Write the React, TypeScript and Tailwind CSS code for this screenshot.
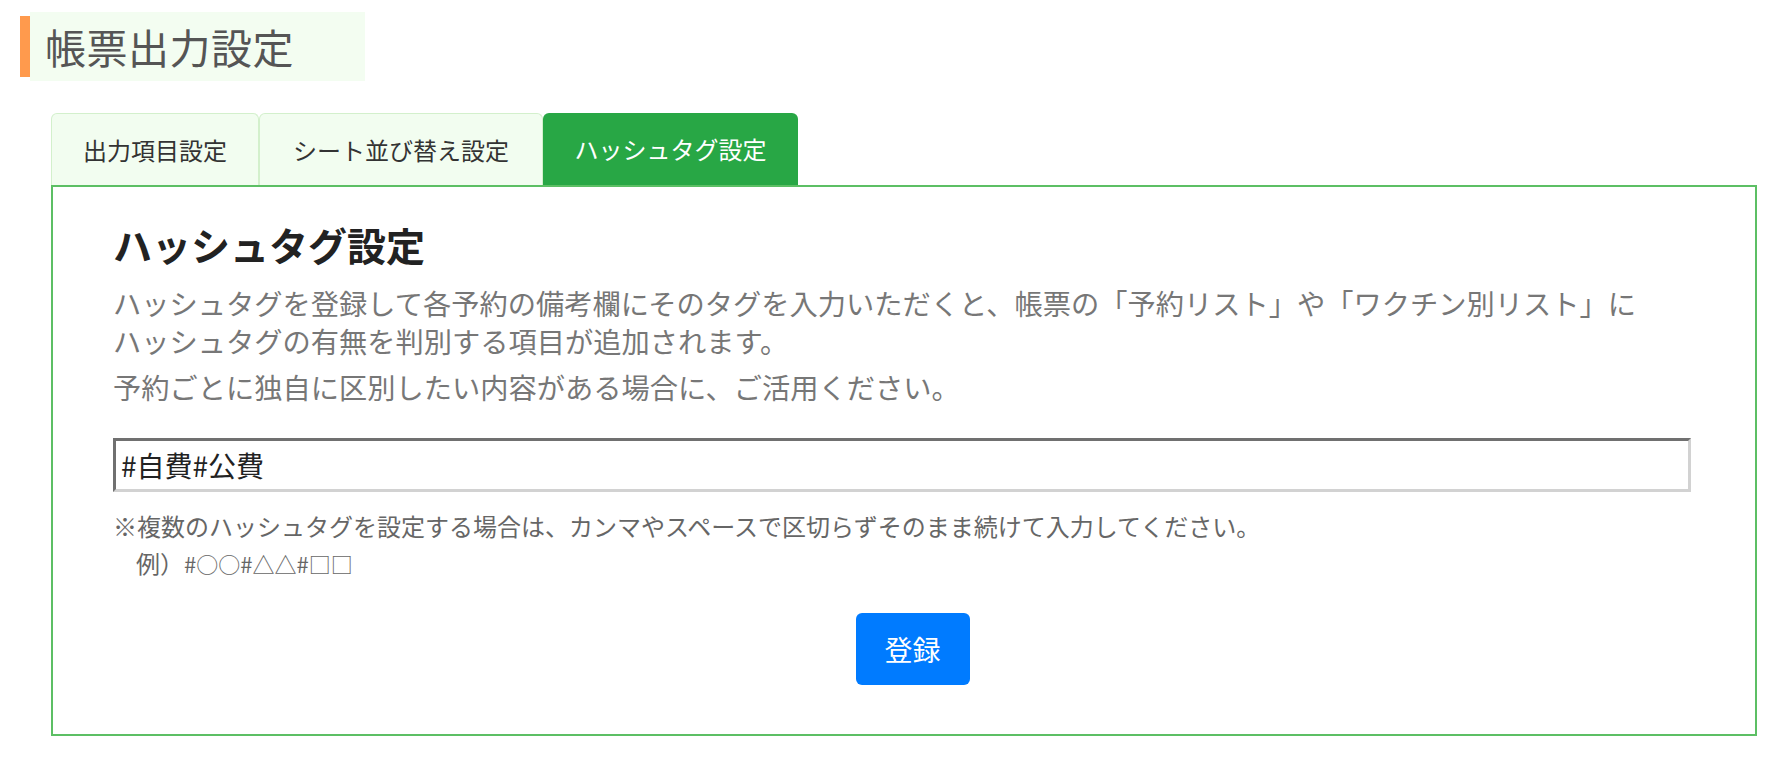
import React, { useState } from "react";

const tabs = [
  { key: "items", label: "出力項目設定", width: "w-[208px]" },
  { key: "sheet", label: "シート並び替え設定", width: "w-[284px]" },
  { key: "hash", label: "ハッシュタグ設定", width: "w-[255px]" },
];

export default function App() {
  const [active, setActive] = useState("hash");
  const [tags, setTags] = useState("#自費#公費");

  return (
    <div className="min-h-screen bg-white font-['Noto_Sans_CJK_JP','Noto_Sans',sans-serif] pt-[12px]">
      {/* page title */}
      <div className="flex items-center ml-[20px]">
        <div className="w-[10px] h-[61px] bg-[#ff9a4d]" />
        <div className="h-[69px] w-[335px] bg-[#f3fdf1] flex items-center pl-[15px]">
          <h1 className="text-[41px] leading-none text-[#555555] tracking-[0.5px]">帳票出力設定</h1>
        </div>
      </div>

      {/* tabs */}
      <div className="ml-[51px] mt-[32px] flex h-[72px]">
        {tabs.map((t) => {
          const on = t.key === active;
          return (
            <button
              key={t.key}
              onClick={() => setActive(t.key)}
              className={
                on
                  ? `${t.width} h-full rounded-t-[6px] bg-[#28a745] text-white text-[24px] leading-none flex items-center justify-center`
                  : `${t.width} h-full rounded-t-[6px] bg-[#f2fdf0] border border-b-0 border-[#d3f0cc] text-[#333333] text-[24px] leading-none flex items-center justify-center`
              }
            >
              {t.label}
            </button>
          );
        })}
      </div>

      {/* panel */}
      <div className="ml-[51px] w-[1706px] h-[551px] border-2 border-[#5cbf64] pl-[60px] pr-[63px] pt-[34px]">
        <h2 className="text-[39px] leading-[46px] font-bold text-[#222222]">ハッシュタグ設定</h2>

        <div className="mt-[17px] text-[28.25px] leading-[38px] text-[#777777] whitespace-nowrap">
          <p>
            ハッシュタグを登録して各予約の備考欄にそのタグを入力いただくと、帳票の「予約リスト」や「ワクチン別リスト」に
            <br />
            ハッシュタグの有無を判別する項目が追加されます。
          </p>
          <p className="mt-[8px]">予約ごとに独自に区別したい内容がある場合に、ご活用ください。</p>
        </div>

        <input
          value={tags}
          onChange={(e) => setTags(e.target.value)}
          className="mt-[32px] block w-[1578px] h-[54px] border-[3px] border-t-[#707070] border-l-[#707070] border-r-[#d2d2d2] border-b-[#d2d2d2] px-[5px] text-[28px] text-[#222222] outline-none"
        />

        <div className="mt-[15px] text-[24px] leading-[37px] text-[#666666] whitespace-nowrap">
          <p>※複数のハッシュタグを設定する場合は、カンマやスペースで区切らずそのまま続けて入力してください。</p>
          <p className="pl-[23px]">
            例）<span className="text-[22px]">#○○#△△#□□</span>
          </p>
        </div>

        <div className="mt-[31px] flex justify-center pl-[20px]">
          <button className="w-[114px] h-[72px] rounded-[6px] bg-[#007bff] text-white text-[28px] leading-none">
            登録
          </button>
        </div>
      </div>
    </div>
  );
}
